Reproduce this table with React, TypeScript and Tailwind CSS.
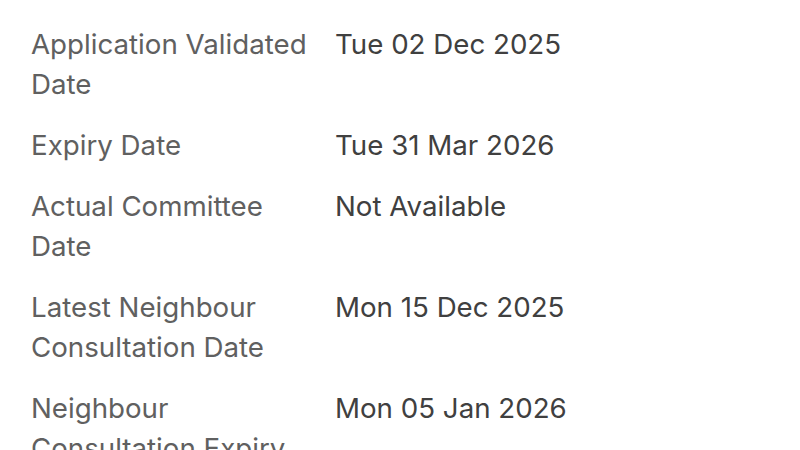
import React from 'react';

const rows: { label: string; value: string }[] = [
  { label: 'Application Validated Date', value: 'Tue 02 Dec 2025' },
  { label: 'Expiry Date', value: 'Tue 31 Mar 2026' },
  { label: 'Actual Committee Date', value: 'Not Available' },
  { label: 'Latest Neighbour Consultation Date', value: 'Mon 15 Dec 2025' },
  { label: 'Neighbour Consultation Expiry Date', value: 'Mon 05 Jan 2026' },
];

export default function App() {
  return (
    <div className="w-[800px] h-[450px] overflow-hidden bg-white font-['Inter',sans-serif] text-[27.7px] leading-[40px]">
      <dl className="grid grid-cols-[282px_1fr] gap-x-[22px] gap-y-[21px] pl-[31px] pt-[24px]">
        {rows.map((row) => (
          <React.Fragment key={row.label}>
            <dt className="text-[#606060]">{row.label}</dt>
            <dd className="text-[#404040]">{row.value}</dd>
          </React.Fragment>
        ))}
      </dl>
    </div>
  );
}
